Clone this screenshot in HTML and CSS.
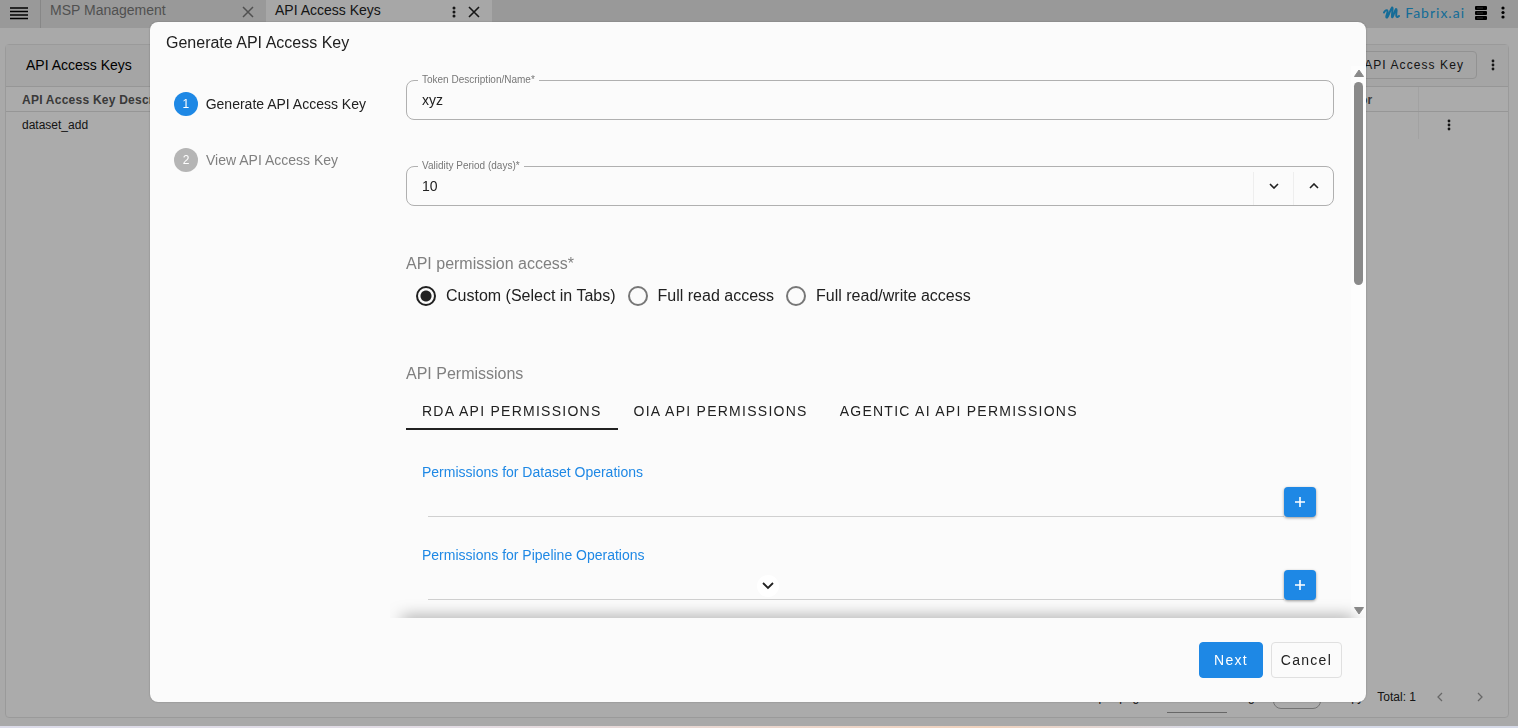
FILE: index.html
```html
<!DOCTYPE html>
<html lang="en">
<head>
    <meta charset="UTF-8">
    <meta name="viewport" content="width=device-width, initial-scale=1.0">
    <title>API Access Keys</title>
    <link rel="stylesheet" href="styles.css">
</head>
<body>
    <!-- page -->
    <div class="app">
        <header class="topbar">
            <button class="menu-btn" type="button" aria-label="Menu">
                <svg width="20" height="14" viewBox="0 0 20 14"><path d="M1 2h18M1 5.500h18M1 9h18M1 12.500h18" stroke="currentColor" stroke-width="1.5"/></svg>
            </button>
            <nav class="tabs">
                <div class="tab">
                    <a href="#">MSP Management</a>
                    <button class="icon-btn" type="button" aria-label="Close tab">
                        <svg width="12" height="12" viewBox="0 0 12 12"><path d="M1 1l10 10M11 1L1 11" stroke="currentColor" stroke-width="1.5"/></svg>
                    </button>
                </div>
                <div class="tab active">
                    <a href="#">API Access Keys</a>
                    <button class="icon-btn" type="button" aria-label="Tab options">
                        <svg width="4" height="12" viewBox="0 0 4 12"><g fill="currentColor"><circle cx="2" cy="2" r="1.5"/><circle cx="2" cy="6" r="1.5"/><circle cx="2" cy="10" r="1.5"/></g></svg>
                    </button>
                    <button class="icon-btn" type="button" aria-label="Close tab">
                        <svg width="12" height="12" viewBox="0 0 12 12"><path d="M1 1l10 10M11 1L1 11" stroke="currentColor" stroke-width="1.6"/></svg>
                    </button>
                </div>
            </nav>
            <div class="brand">
                <svg width="17" height="13" viewBox="0 0 17 13" fill="none" stroke="currentColor" stroke-linecap="round" stroke-linejoin="round"><path d="M1 6.500C2 4.500 4 3.500 4.500 5C5 7 2.500 10 3.500 11.500C5 12.500 7 4 9 1.500C10.500 1 8.500 9 9 11C10 12.500 11.500 4.500 13 3C14.500 3 12.500 8.500 13.500 10.500C14 11.500 15 11 16 10" stroke-width="2"/></svg>
                <span>Fabrix.ai</span>
            </div>
            <button class="icon-btn" type="button" aria-label="Servers">
                <svg width="12" height="14" viewBox="0 0 12 14"><g fill="currentColor"><rect width="12" height="4" rx="1"/><rect y="5" width="12" height="4" rx="1"/><rect y="10" width="12" height="4" rx="1"/></g><path d="M2 2h6M2 7h6M2 12h6" stroke="#777" stroke-width="0.6"/></svg>
            </button>
            <button class="icon-btn" type="button" aria-label="More">
                <svg width="4" height="14" viewBox="0 0 4 14"><g fill="currentColor"><circle cx="2" cy="2" r="1.6"/><circle cx="2" cy="6.500" r="1.6"/><circle cx="2" cy="11" r="1.6"/></g></svg>
            </button>
        </header>

        <main class="panel">
            <div class="panel-head">
                <h1>API Access Keys</h1>
                <button class="add-btn" type="button">Generate API Access Key</button>
                <button class="icon-btn" type="button" aria-label="Panel options">
                    <svg width="4" height="12" viewBox="0 0 4 12"><g fill="currentColor"><circle cx="2" cy="2" r="1.4"/><circle cx="2" cy="6" r="1.4"/><circle cx="2" cy="10" r="1.4"/></g></svg>
                </button>
            </div>
            <table class="keys">
                <thead>
                    <tr>
                        <th class="desc">API Access Key Description</th>
                        <th class="author">Author</th>
                        <th class="actions"></th>
                    </tr>
                </thead>
                <tbody>
                    <tr>
                        <td>dataset_add</td>
                        <td class="author"></td>
                        <td class="actions">
                            <button class="icon-btn" type="button" aria-label="Row options">
                                <svg width="4" height="12" viewBox="0 0 4 12"><g fill="currentColor"><circle cx="2" cy="2" r="1.4"/><circle cx="2" cy="6" r="1.4"/><circle cx="2" cy="10" r="1.4"/></g></svg>
                            </button>
                        </td>
                    </tr>
                </tbody>
            </table>
            <footer class="pager">
                <label for="rows">Rows per page:</label>
                <input class="rows" id="rows" type="text">
                <label for="page">Page</label>
                <input class="page" id="page" type="text">
                <span class="range">qty</span>
                <span>Total: 1</span>
                <button class="icon-btn" type="button" aria-label="Previous page">
                    <svg width="8" height="10" viewBox="0 0 8 10"><path d="M6 1L2 5l4 4" fill="none" stroke="currentColor" stroke-width="1.3"/></svg>
                </button>
                <button class="icon-btn" type="button" aria-label="Next page">
                    <svg width="8" height="10" viewBox="0 0 8 10"><path d="M2 1l4 4-4 4" fill="none" stroke="currentColor" stroke-width="1.3"/></svg>
                </button>
            </footer>
        </main>
    </div>

    <!-- dialog -->
    <div class="overlay">
        <section class="dialog" role="dialog" aria-labelledby="dialog-title">
            <h2 id="dialog-title">Generate API Access Key</h2>
            <div class="dialog-body">
                <ol class="steps">
                    <li class="current"><span class="num">1</span>Generate API Access Key</li>
                    <li><span class="num">2</span>View API Access Key</li>
                </ol>
                <div class="scroll-area">
                    <form class="form">
                        <fieldset class="field">
                            <legend><label for="token">Token Description/Name*</label></legend>
                            <input id="token" type="text" value="xyz">
                        </fieldset>
                        <fieldset class="field">
                            <legend><label for="days">Validity Period (days)*</label></legend>
                            <input id="days" type="text" value="10">
                            <button class="step-btn" type="button" aria-label="Decrease">
                                <svg width="10" height="6" viewBox="0 0 10 6"><path d="M1 1l4 4 4-4" fill="none" stroke="currentColor" stroke-width="1.6"/></svg>
                            </button>
                            <button class="step-btn" type="button" aria-label="Increase">
                                <svg width="10" height="6" viewBox="0 0 10 6"><path d="M1 5l4-4 4 4" fill="none" stroke="currentColor" stroke-width="1.6"/></svg>
                            </button>
                        </fieldset>

                        <h3 class="access-title">API permission access*</h3>
                        <div class="radios">
                            <label><input type="radio" name="access" checked>Custom (Select in Tabs)</label>
                            <label><input type="radio" name="access">Full read access</label>
                            <label><input type="radio" name="access">Full read/write access</label>
                        </div>

                        <h3>API Permissions</h3>
                        <div class="perm-tabs">
                            <button class="active" type="button">RDA API PERMISSIONS</button>
                            <button type="button">OIA API PERMISSIONS</button>
                            <button type="button">AGENTIC AI API PERMISSIONS</button>
                        </div>

                        <div class="perm">
                            <h4>Permissions for Dataset Operations</h4>
                            <div class="perm-row">
                                <span class="line"></span>
                                <button class="plus" type="button" aria-label="Add dataset permission">
                                    <svg width="10" height="10" viewBox="0 0 10 10"><path d="M5 0v10M0 5h10" stroke="currentColor" stroke-width="1.6"/></svg>
                                </button>
                            </div>
                        </div>
                        <div class="perm">
                            <h4>Permissions for Pipeline Operations</h4>
                            <div class="perm-row">
                                <span class="line"></span>
                                <button class="plus" type="button" aria-label="Add pipeline permission">
                                    <svg width="10" height="10" viewBox="0 0 10 10"><path d="M5 0v10M0 5h10" stroke="currentColor" stroke-width="1.6"/></svg>
                                </button>
                            </div>
                        </div>
                    </form>
                    <div class="scrollbar">
                        <svg width="10" height="8" viewBox="0 0 10 8"><path d="M5 1l4.500 6.500h-9z" fill="currentColor" stroke="currentColor" stroke-linejoin="round"/></svg>
                        <div class="track"><div class="thumb"></div></div>
                        <svg width="10" height="8" viewBox="0 0 10 8"><path d="M5 7l4.500-6.500h-9z" fill="currentColor" stroke="currentColor" stroke-linejoin="round"/></svg>
                    </div>
                    <div class="fade"></div>
                </div>
                <button class="more" type="button" aria-label="Scroll down">
                    <svg width="12" height="8" viewBox="0 0 12 8"><path d="M1 1l5 5 5-5" fill="none" stroke="currentColor" stroke-width="1.8"/></svg>
                </button>
            </div>
            <div class="dialog-actions">
                <button class="btn primary" type="button">Next</button>
                <button class="btn" type="button">Cancel</button>
            </div>
        </section>
    </div>
</body>
</html>
```
FILE: styles.css
```css
* {
    box-sizing: border-box;
    margin: 0;
    padding: 0;
}
body {
    font-family: "Liberation Sans", Arial, sans-serif;
    font-size: 12px;
    color: #212121;
    background: linear-gradient(90deg, #dcdcea, #e3dce4 30%, #f0d2bd 65%, #d6dae8 80%);
}
button,
input {
    font: inherit;
    color: inherit;
    background: none;
    border: 0;
    outline: 0;
}
svg {
    display: block;
}
.icon-btn {
    padding: 4px;
}

/* page */
.app {
    display: flex;
    flex-direction: column;
    height: calc(100vh - 2px);
    background: #fafafa;
}
.topbar {
    display: flex;
    align-items: center;
    height: 28px;
    padding: 0 9px 3px 0;
    gap: 6px;
    background: #e2e2e2;
    color: #000;
}
.menu-btn {
    padding: 0 5px 0 9px;
}
.tabs {
    display: flex;
    flex: 1;
    font-size: 14px;
}
.tab {
    display: flex;
    align-items: center;
    width: 226px;
    height: 28px;
    margin-bottom: -3px;
    padding: 0 8px 8px 9px;
    border-left: 1px solid #c8c8c8;
    color: #777;
}
.tab.active {
    border: 0;
    background: #f6f6f6;
    color: #222;
}
.tab a {
    flex: 1;
    color: inherit;
    text-decoration: none;
}
.tab .icon-btn {
    padding: 4px 4px 0;
}
.tab .icon-btn + .icon-btn {
    padding-left: 8px;
}
.brand {
    display: flex;
    align-items: center;
    gap: 5px;
    color: #209fdf;
    font-family: Lato, sans-serif;
    font-size: 14px;
    letter-spacing: 1px;
}
.panel {
    display: flex;
    flex-direction: column;
    flex: 1;
    margin: 16px 9px 8px 5px;
    border: 1px solid #e4e4e4;
    border-radius: 4px;
    background: #fdfdfd;
}
.panel-head {
    display: flex;
    align-items: center;
    height: 42px;
    padding: 0 9px 2px 20px;
    gap: 10px;
    background: #f3f3f3;
    border-bottom: 1px solid #dedede;
}
.panel-head h1 {
    flex: 1;
    font-size: 14px;
    font-weight: 400;
    color: #000;
}
.add-btn {
    height: 28px;
    padding: 0 12px;
    border: 1px solid #d8d8d8;
    border-radius: 4px;
    letter-spacing: 0.09em;
}
.keys {
    width: 100%;
    border-collapse: collapse;
    table-layout: fixed;
}
.keys th {
    height: 24px;
    padding: 2px 0 0 16px;
    border-bottom: 1px solid #dedede;
    color: #555;
    text-align: left;
    letter-spacing: 0.02em;
}
.keys .desc {
    width: 150px;
    overflow: hidden;
    white-space: nowrap;
}
.keys td {
    height: 28px;
    padding-left: 16px;
}
.keys .author {
    padding-right: 45px;
    text-align: right;
}
.keys .actions {
    width: 90px;
    padding-left: 24px;
    border-left: 1px solid #efefef;
}
.pager {
    display: flex;
    align-items: center;
    justify-content: flex-end;
    height: 40px;
    margin-top: auto;
    padding-right: 20px;
}
.pager .rows {
    width: 60px;
    height: 32px;
    margin: 0 6px 0 18px;
    border-bottom: 1px solid #999;
}
.pager .page {
    width: 48px;
    height: 24px;
    margin: 0 26px 0 12px;
    border: 1px solid #aaa;
    border-radius: 8px;
}
.pager .range {
    margin-right: 14px;
}
.pager .icon-btn {
    margin-left: 16px;
    color: #999;
}
.pager .icon-btn + .icon-btn {
    margin-left: 24px;
}

/* dialog */
.overlay {
    position: fixed;
    inset: 0 0 2px;
    padding: 22px 152px 24px 150px;
    background: rgba(0, 0, 0, 0.32);
}
.dialog {
    display: flex;
    flex-direction: column;
    height: 100%;
    border-radius: 8px;
    background: #fbfbfb;
    box-shadow: 0 0 2px rgba(0, 0, 0, 0.3);
}
.dialog h2 {
    padding: 11px 16px 13px;
    font-size: 16px;
    font-weight: 400;
    line-height: 20px;
}
.dialog-body {
    position: relative;
    display: flex;
    flex: 1;
    min-height: 0;
}
.steps {
    width: 240px;
    padding: 26px 24px;
    list-style: none;
    font-size: 14px;
}
.steps li {
    display: flex;
    align-items: center;
    gap: 8px;
    height: 24px;
    margin-bottom: 32px;
    white-space: nowrap;
    color: #808080;
}
.steps li.current {
    color: #212121;
}
.steps .num {
    width: 24px;
    border-radius: 50%;
    background: #b5b5b5;
    color: #fff;
    font-size: 12px;
    line-height: 24px;
    text-align: center;
}
.steps .current .num {
    background: #1e88e5;
}
.scroll-area {
    position: relative;
    display: flex;
    flex: 1;
    overflow: hidden;
}
.form {
    flex: 1;
    padding: 8px 17px 0 16px;
}
.field {
    display: flex;
    height: 46px;
    margin-bottom: 40px;
    border: 1px solid #b0b0b0;
    border-radius: 8px;
}
.field legend {
    margin-left: 11px;
    padding: 0 4px;
    color: #777;
    font-size: 10px;
    line-height: 12px;
}
.field input {
    flex: 1;
    padding: 0 15px 6px;
    font-size: 14px;
}
.step-btn {
    width: 40px;
    padding: 0 15px 6px;
    border-left: 1px solid #eee;
}
.form h3 {
    color: #808080;
    font-size: 16px;
    font-weight: 400;
    line-height: 20px;
}
.form .access-title {
    margin-top: 48px;
}
.radios {
    display: flex;
    gap: 12px;
    margin: 12px 10px 58px;
    font-size: 16px;
    line-height: 20px;
}
.radios label {
    display: flex;
    align-items: center;
    gap: 10px;
}
.radios input {
    appearance: none;
    width: 20px;
    height: 20px;
    border: 2px solid #777;
    border-radius: 50%;
}
.radios input:checked {
    border-color: #212121;
    background: radial-gradient(#212121 5px, transparent 6px);
}
.perm-tabs {
    display: flex;
    margin-top: 10px;
    font-size: 14px;
}
.perm-tabs button {
    height: 36px;
    padding: 0 16px;
    border-bottom: 2px solid transparent;
    letter-spacing: 0.09em;
}
.perm-tabs .active {
    border-color: #212121;
}
.perm {
    padding: 32px 18px 0 16px;
}
.perm + .perm {
    padding-top: 28px;
}
.perm h4 {
    color: #1e88e5;
    font-size: 14px;
    font-weight: 400;
    line-height: 20px;
}
.perm-row {
    display: flex;
    align-items: flex-end;
    padding: 5px 0 0 6px;
}
.perm-row .line {
    flex: 1;
    border-bottom: 1px solid #d0d0d0;
}
.plus {
    width: 32px;
    height: 30px;
    padding: 0 11px;
    border-radius: 4px;
    background: #1e88e5;
    color: #fff;
    box-shadow: 0 1px 3px rgba(0, 0, 0, 0.4);
}
.scrollbar {
    display: flex;
    flex-direction: column;
    align-items: center;
    width: 15px;
    padding: 3px 0;
    gap: 5px;
    background: #fdfdfd;
    color: #8a8a8a;
}
.track {
    flex: 1;
}
.thumb {
    width: 9px;
    height: 39%;
    border-radius: 5px;
    background: #8a8a8a;
}
.fade {
    position: absolute;
    left: 12px;
    right: 12px;
    bottom: -8px;
    height: 8px;
    box-shadow: 0 0 16px rgba(0, 0, 0, 0.5);
}
.more {
    position: absolute;
    bottom: 21px;
    left: calc(51% - 13px);
    width: 22px;
    height: 22px;
    padding: 0 5px;
    border-radius: 50%;
    background: #fff;
}
.dialog-actions {
    display: flex;
    justify-content: flex-end;
    gap: 8px;
    padding: 24px;
}
.btn {
    height: 36px;
    padding: 0 9px;
    border: 1px solid #e0e0e0;
    border-radius: 4px;
    font-size: 14px;
    letter-spacing: 0.09em;
}
.btn.primary {
    padding: 0 14px;
    border-color: #1e88e5;
    background: #1e88e5;
    color: #fff;
}
```
